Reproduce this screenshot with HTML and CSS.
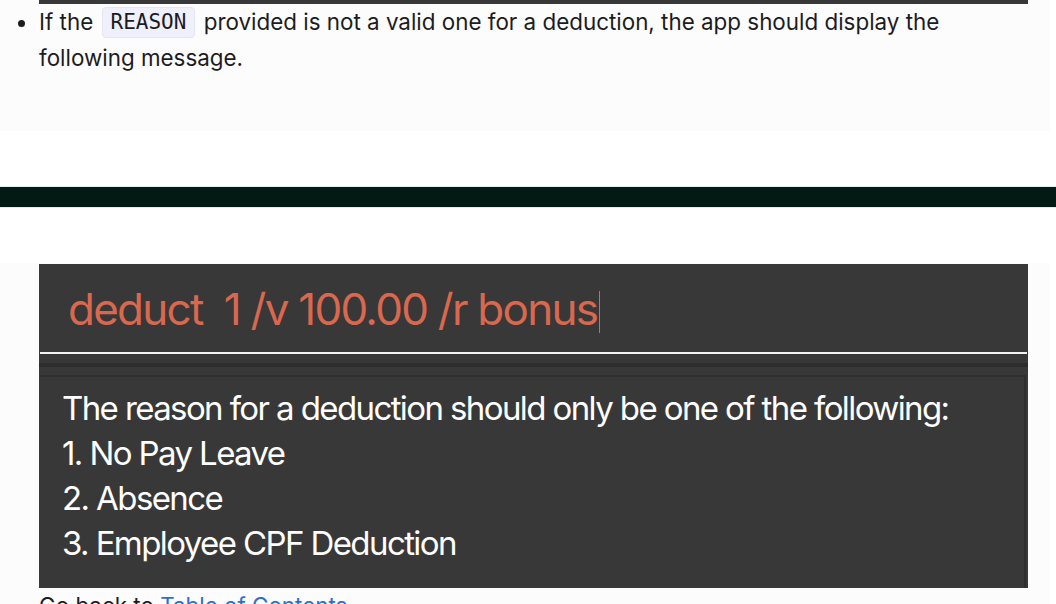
FILE: index.html
```html
<!DOCTYPE html>
<html>
<head>
<meta charset="utf-8">
<link rel="stylesheet" href="styles.css">
</head>
<body>
<section class="block block-top">
  <div class="shot-tail"></div>
  <ul class="list">
    <li>If the <code>REASON</code> provided is not a valid one for a deduction, the app should display the following message.</li>
  </ul>
</section>

<div class="divider"><div class="divider-bar"></div></div>

<section class="block block-bottom">
  <div class="shot">
    <div class="cmd">
      <span class="cmd-text">deduct&nbsp; 1 /v 100.00 /r bonus</span><span class="caret"></span>
    </div>
    <div class="cmd-line"></div>
    <div class="gap"><div class="gap-band"></div></div>
    <div class="result">
      <p>The reason for a deduction should only be one of the following:</p>
      <p>1. No Pay Leave</p>
      <p>2. Absence</p>
      <p>3. Employee CPF Deduction</p>
    </div>
  </div>
  <ul class="list list-after">
    <li>Go back to <a href="#">Table of Contents</a></li>
  </ul>
</section>
</body>
</html>
```

FILE: styles.css
```css
html, body {
  margin: 0;
  padding: 0;
  background: #ffffff;
}
body {
  font-family: Inter, "Noto Sans", "Liberation Sans", sans-serif;
  color: #1c1c1e;
  width: 1056px;
  height: 604px;
  overflow: hidden;
}
.block {
  background: #fcfcfc;
  width: 1050px;
}
.block-top {
  height: 131px;
}
.shot-tail {
  margin-left: 39px;
  width: 989px;
  height: 4px;
  background: #383838;
}
.list {
  margin: 0;
  padding-left: 39px;
  font-size: 22.4px;
  line-height: 36px;
  letter-spacing: 0;
}
.list li {
  width: 940px;
}
code {
  display: inline-block;
  font-family: "DejaVu Sans Mono", "Liberation Mono", monospace;
  font-size: 21px;
  line-height: 23px;
  background: #eff0fb;
  border: 1px solid #e4e6f2;
  border-radius: 4px;
  padding: 3px 8px;
  margin: 0 2px;
  color: #1c1c1e;
  vertical-align: 1px;
}
.divider {
  margin-top: 55px;
  border-top: 1px solid #e6eaea;
  border-bottom: 1px solid #e6eaea;
}
.divider-bar {
  height: 20px;
  background: #021a13;
}
.block-bottom {
  margin-top: 55px;
  padding-top: 1px;
  height: 400px;
}
.shot {
  margin-left: 39px;
  width: 989px;
  height: 324px;
  background: #383838;
  display: flex;
  flex-direction: column;
}
.cmd {
  height: 88px;
  display: flex;
  align-items: center;
  padding-left: 29px;
  padding-top: 2px;
  box-sizing: border-box;
}
.cmd-text {
  font-size: 44px;
  color: #d9684f;
  letter-spacing: -1.75px;
  white-space: pre;
}
.caret {
  width: 1px;
  height: 42px;
  background: #d9684f;
  margin-left: 2px;
  margin-top: 6px;
}
.cmd-line {
  height: 2px;
  margin: 0 1px;
  background: #f2f2f2;
}
.gap {
  height: 21px;
  padding-top: 9px;
  box-sizing: border-box;
}
.gap-band {
  height: 4px;
  background: #2d2d2d;
}
.result {
  flex: 1;
  margin: 0 2px 0 1px;
  border-top: 2px solid #2e2e2e;
  border-right: 2px solid #2e2e2e;
  padding: 9px 0 0 22px;
  color: #ffffff;
  font-size: 33px;
  letter-spacing: -1.6px;
}
.result p {
  margin: 0;
  line-height: 45px;
}
.list-after {
  margin-top: 0;
  line-height: 36px;
}
.list-after a {
  color: #2f6fc9;
  text-decoration: none;
}
```
